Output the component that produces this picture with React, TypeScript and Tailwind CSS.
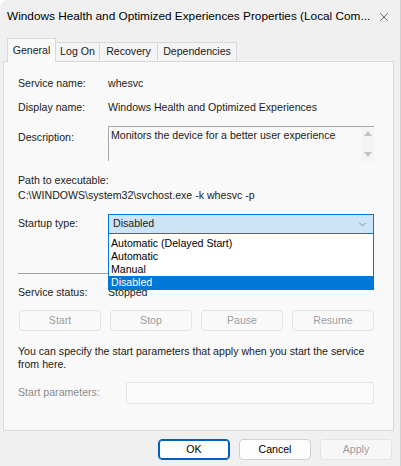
import { ChevronDown, X } from 'lucide-react';

const font = { fontFamily: '"Segoe UI", "Liberation Sans", Arial, sans-serif' };

function Row({ label, value, muted }: { label: string; value: string; muted?: boolean }) {
  return (
    <div className="flex h-[16px] items-center">
      <span className={`w-[90px] shrink-0 ${muted ? 'text-[#8a8a8a]' : ''}`}>{label}</span>
      <span>{value}</span>
    </div>
  );
}

function PanelButton({ children }: { children: string }) {
  return (
    <div className="flex h-[21px] w-[82px] items-center justify-center rounded-[4px] border border-[#e3e3e3] bg-[#f9f9f9] text-[#9d9d9d]">
      {children}
    </div>
  );
}

export default function App() {
  const options = ['Automatic (Delayed Start)', 'Automatic', 'Manual', 'Disabled'];

  return (
    <div
      className="relative h-[466px] w-[401px] overflow-hidden rounded-tl-[8px] border-r border-[#d0d0d0] bg-[#f0f0f0] text-[10.6px] text-[#1b1b1b]"
      style={font}
    >
      {/* title bar */}
      <div className="flex h-[34px] items-center justify-between pl-[7px] pr-[9px]">
        <span className="text-[11.8px] text-black">
          Windows Health and Optimized Experiences Properties (Local Com...
        </span>
        <X className="h-[14px] w-[14px] text-[#333]" strokeWidth={1.2} />
      </div>

      {/* tabs */}
      <div className="mt-[4px] flex h-[23px] items-end pl-[7px]">
        <div className="relative z-10 -mb-px flex h-[24px] w-[49px] items-start justify-center border border-b-0 border-[#d9d9d9] bg-[#f9f9f9] pt-[4px]">
          General
        </div>
        <div className="flex h-[19px] w-[44px] items-center justify-center border-r border-t border-[#d9d9d9] bg-[#f4f4f4]">
          Log On
        </div>
        <div className="flex h-[19px] w-[58px] items-center justify-center border-r border-t border-[#d9d9d9] bg-[#f4f4f4]">
          Recovery
        </div>
        <div className="flex h-[19px] w-[79px] items-center justify-center border-r border-t border-[#d9d9d9] bg-[#f4f4f4]">
          Dependencies
        </div>
      </div>

      {/* general panel */}
      <div className="mx-[3px] h-[370px] w-[391px] border border-[#d9d9d9] bg-[#f9f9f9] pl-[14px] pr-[19px]">
        <div className="mt-[14px]">
          <Row label="Service name:" value="whesvc" />
        </div>
        <div className="mt-[8px]">
          <Row label="Display name:" value="Windows Health and Optimized Experiences" />
        </div>

        <div className="mt-[10px] flex">
          <span className="mt-[4px] w-[90px] shrink-0">Description:</span>
          <div className="flex h-[35px] flex-1 border-l border-t border-[#a8a8a8]">
            <div className="flex-1 pl-[2px] pt-[1px] leading-[15px]">
              Monitors the device for a better user experience
            </div>
            <div className="flex w-[13px] flex-col items-center justify-between bg-[#f4f4f4] py-[4px]">
              <svg width="8" height="5" viewBox="0 0 8 5">
                <path d="M4 0L8 5H0Z" fill="#c2c2c2" />
              </svg>
              <svg width="8" height="5" viewBox="0 0 8 5">
                <path d="M0 0H8L4 5Z" fill="#c2c2c2" />
              </svg>
            </div>
          </div>
        </div>

        <div className="mt-[12px] flex h-[15px] items-center">Path to executable:</div>
        <div className="flex h-[15px] items-center">C:\WINDOWS\system32\svchost.exe -k whesvc -p</div>

        {/* startup type */}
        <div className="mt-[11px] flex items-center">
          <span className="w-[90px] shrink-0">Startup type:</span>
          <div className="relative flex-1">
            <div className="flex h-[20px] items-center justify-between border border-[#0078d7] bg-[#cce4f7] pl-[4px] pr-[5px]">
              <span>Disabled</span>
              <ChevronDown className="h-[11px] w-[11px] text-[#606060]" strokeWidth={1.5} />
            </div>
            <div className="absolute left-0 right-0 top-[20px] z-10 border border-t-0 border-[#0078d7] bg-white pt-[3px] leading-[13px]">
              {options.map((o) => (
                <div
                  key={o}
                  className={`h-[13px] pl-[2px] ${o === 'Disabled' ? 'bg-[#0078d7] text-white' : 'text-black'}`}
                >
                  {o}
                </div>
              ))}
            </div>
          </div>
        </div>

        <div className="mt-[39px] h-px bg-[#a0a0a0]" />

        <div className="mt-[11px]">
          <Row label="Service status:" value="Stopped" />
        </div>

        <div className="mt-[9px] flex justify-between pl-px">
          <PanelButton>Start</PanelButton>
          <PanelButton>Stop</PanelButton>
          <PanelButton>Pause</PanelButton>
          <PanelButton>Resume</PanelButton>
        </div>

        <p className="mt-[14px] leading-[13px]">
          You can specify the start parameters that apply when you start the service
          <br />
          from here.
        </p>

        <div className="mt-[11px] flex items-center">
          <span className="w-[108px] shrink-0 text-[#8a8a8a]">Start parameters:</span>
          <div className="h-[22px] flex-1 rounded-[3px] border border-[#e5e5e5] bg-[#fbfbfb]" />
        </div>
      </div>

      {/* dialog buttons */}
      <div className="mt-[8px] flex justify-end gap-[9px] pr-[8px]">
        <div className="flex h-[21px] w-[72px] items-center justify-center rounded-[4px] border border-[#005fb8] bg-[#fdfdfd] text-black shadow-[inset_0_0_0_1px_#005fb8]">
          OK
        </div>
        <div className="flex h-[21px] w-[72px] items-center justify-center rounded-[4px] border border-[#d0d0d0] bg-[#fdfdfd] text-black">
          Cancel
        </div>
        <div className="flex h-[21px] w-[72px] items-center justify-center rounded-[4px] border border-[#e5e5e5] bg-[#f7f7f7] text-[#9d9d9d]">
          Apply
        </div>
      </div>
    </div>
  );
}
